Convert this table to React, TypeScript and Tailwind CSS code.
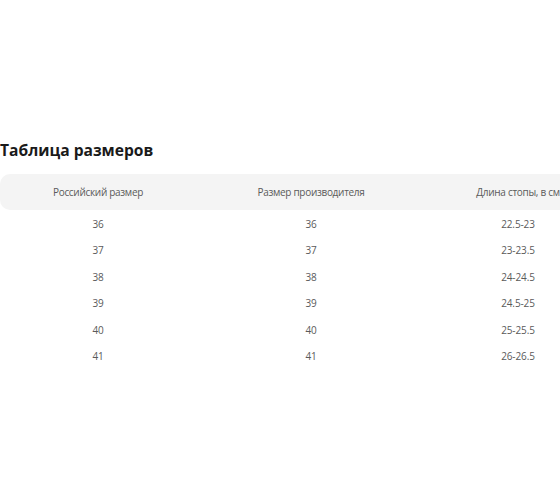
import React from 'react';

const rows = [
  ['36', '36', '22.5-23'],
  ['37', '37', '23-23.5'],
  ['38', '38', '24-24.5'],
  ['39', '39', '24.5-25'],
  ['40', '40', '25-25.5'],
  ['41', '41', '26-26.5'],
];

const headers = ['Российский размер', 'Размер производителя', 'Длина стопы, в см'];

export default function App() {
  return (
    <div className="w-[560px] h-[504px] overflow-hidden bg-white" style={{ fontFamily: '"Open Sans", "Noto Sans", sans-serif' }}>
      <div className="w-[640px] pt-[138px]">
        <h2 className="text-[15.6px] leading-[24px] font-bold text-[#1a1a1a]">Таблица размеров</h2>
        <div className="mt-[12px]">
          <div className="grid grid-cols-[196px_230px_184px] h-[36px] items-center bg-[#f4f4f4] rounded-[10px] text-[10px] tracking-[-0.3px] text-[#5a5a5a]">
            {headers.map((h) => (
              <div key={h} className="text-center whitespace-nowrap">{h}</div>
            ))}
          </div>
          <div className="pt-[1px]">
            {rows.map((r) => (
              <div key={r[0]} className="grid grid-cols-[196px_230px_184px] h-[26.5px] items-center text-[10px] tracking-[-0.1px] text-[#5a5a5a]">
                {r.map((c, i) => (
                  <div key={i} className="text-center">{c}</div>
                ))}
              </div>
            ))}
          </div>
        </div>
      </div>
    </div>
  );
}
